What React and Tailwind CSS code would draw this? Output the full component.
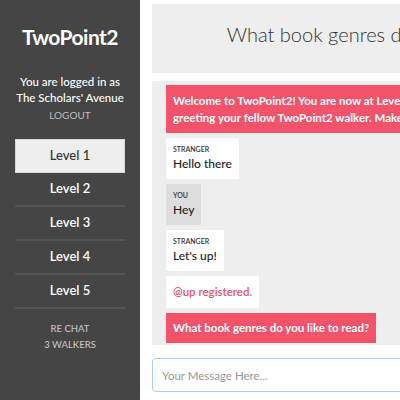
import React from 'react';

const levels = ['Level 1', 'Level 2', 'Level 3', 'Level 4', 'Level 5'];

const messages = [
  { who: 'STRANGER', text: 'Hello there', mine: false },
  { who: 'YOU', text: 'Hey', mine: true },
  { who: 'STRANGER', text: "Let's up!", mine: false },
];

const Sidebar = () => (
  <aside className="w-[140px] shrink-0 h-full bg-[#454545] flex flex-col items-center text-white">
    <h1 className="mt-[25px] text-[21px] leading-[24px] font-bold tracking-tight">TwoPoint2</h1>
    <div className="mt-[25px] text-[11.5px] leading-[16px] font-medium text-center">
      <p>You are logged in as</p>
      <p>The Scholars' Avenue</p>
    </div>
    <button className="mt-[2px] text-[10px] leading-[14px] text-[#bdbdbd]">LOGOUT</button>
    <nav className="mt-[17px] w-[110px] flex flex-col">
      {levels.map((l, i) =>
        i === 0 ? (
          <div key={l} className="h-[34px] flex items-center justify-center bg-[#eeeeee] border border-[#d6d6d6] text-[#333] text-[13px] font-medium">
            {l}
          </div>
        ) : (
          <div key={l} className="h-[34px] flex items-center justify-center border-b-2 border-[#555] text-[13px] font-semibold">
            {l}
          </div>
        )
      )}
    </nav>
    <div className="mt-[12px] text-[9.5px] leading-[16px] font-medium text-[#c4c4c4] text-center">
      <p>RE CHAT</p>
      <p>3 WALKERS</p>
    </div>
  </aside>
);

const App = () => {
  return (
    <div className="flex h-[400px] w-[400px] overflow-hidden bg-white font-['Lato','Open_Sans',sans-serif]">
      <Sidebar />
      <main className="w-[493px] shrink-0 pl-[12px] pt-[4px] flex flex-col">
        <header className="h-[69px] bg-[#eeeeee] flex justify-center pt-[18px]">
          <h2 className="text-[20px] leading-[24px] font-light text-[#333] whitespace-nowrap">
            What book genres do you like to read?
          </h2>
        </header>
        <section className="mt-[8px] h-[264px] bg-[#eeeeee] px-[14px] pt-[4px] flex flex-col items-start gap-[5px] overflow-hidden">
          <div className="w-full bg-[#f2526a] text-white font-bold text-[11.5px] leading-[17px] px-[7px] pt-[7px] pb-[7px]">
            Welcome to TwoPoint2! You are now at Level 1. Start by
            <br />
            greeting your fellow TwoPoint2 walker. Make sure to say hi!
          </div>
          {messages.map((m, i) => (
            <div
              key={i}
              className={`px-[7px] py-[6px] ${m.mine ? 'bg-[#dddddd]' : 'bg-white'}`}
            >
              <p className="text-[7px] leading-[11px] font-semibold text-[#333]">{m.who}</p>
              <p className="text-[12px] leading-[18px] font-medium text-[#222]">{m.text}</p>
            </div>
          ))}
          <div className="bg-white px-[7px] py-[7px] text-[11.5px] leading-[18px] font-semibold text-[#f2526a]">
            @up registered.
          </div>
          <div className="bg-[#f2526a] text-white font-bold text-[11.5px] leading-[18px] px-[7px] py-[6px]">
            What book genres do you like to read?
          </div>
        </section>
        <div className="mt-[13px]">
          <input
            type="text"
            placeholder="Your Message Here..."
            className="w-full h-[34px] rounded-[4px] border border-[#a9d0f0] px-[9px] text-[11.5px] text-[#333] placeholder-[#999] outline-none"
          />
        </div>
      </main>
    </div>
  );
};

export default App;
